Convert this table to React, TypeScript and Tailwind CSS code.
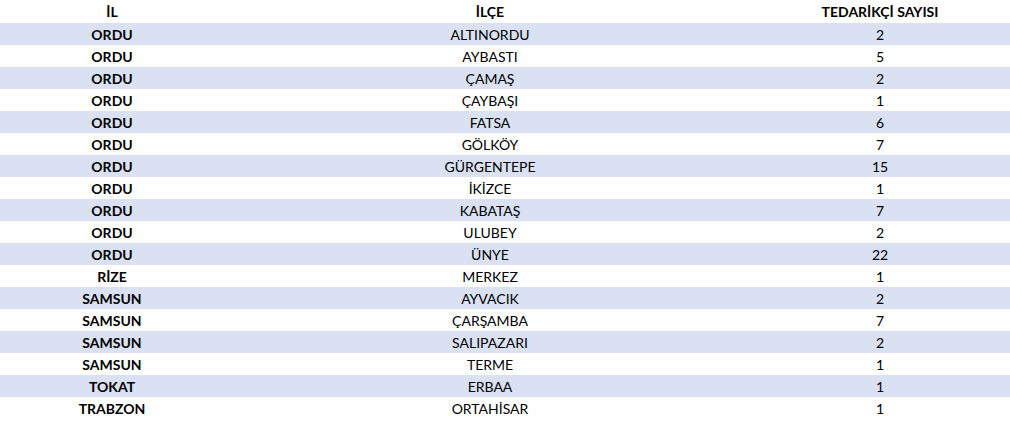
const rows: [string, string, number][] = [
  ["ORDU", "ALTINORDU", 2],
  ["ORDU", "AYBASTI", 5],
  ["ORDU", "ÇAMAŞ", 2],
  ["ORDU", "ÇAYBAŞI", 1],
  ["ORDU", "FATSA", 6],
  ["ORDU", "GÖLKÖY", 7],
  ["ORDU", "GÜRGENTEPE", 15],
  ["ORDU", "İKİZCE", 1],
  ["ORDU", "KABATAŞ", 7],
  ["ORDU", "ULUBEY", 2],
  ["ORDU", "ÜNYE", 22],
  ["RİZE", "MERKEZ", 1],
  ["SAMSUN", "AYVACIK", 2],
  ["SAMSUN", "ÇARŞAMBA", 7],
  ["SAMSUN", "SALIPAZARI", 2],
  ["SAMSUN", "TERME", 1],
  ["TOKAT", "ERBAA", 1],
  ["TRABZON", "ORTAHİSAR", 1],
]

export default function App() {
  return (
    <div className="w-[1010px] h-[423px] bg-white text-black text-[14px] font-['Lato',sans-serif] overflow-hidden">
      {/* header */}
      <div className="grid grid-cols-[224px_532px_1fr] h-[23px] items-center font-bold">
        <div className="text-center">İL</div>
        <div className="text-center">İLÇE</div>
        <div className="text-center pr-[6px]">TEDARİKÇİ SAYISI</div>
      </div>
      {rows.map(([il, ilce, n], i) => (
        <div
          key={i}
          className={`grid grid-cols-[224px_532px_1fr] h-[22px] items-center ${i % 2 === 0 ? "bg-[#d9e1f2]" : "bg-white"}`}
        >
          <div className="text-center font-bold">{il}</div>
          <div className="text-center">{ilce}</div>
          <div className="text-center pr-[6px]">{n}</div>
        </div>
      ))}
    </div>
  )
}
